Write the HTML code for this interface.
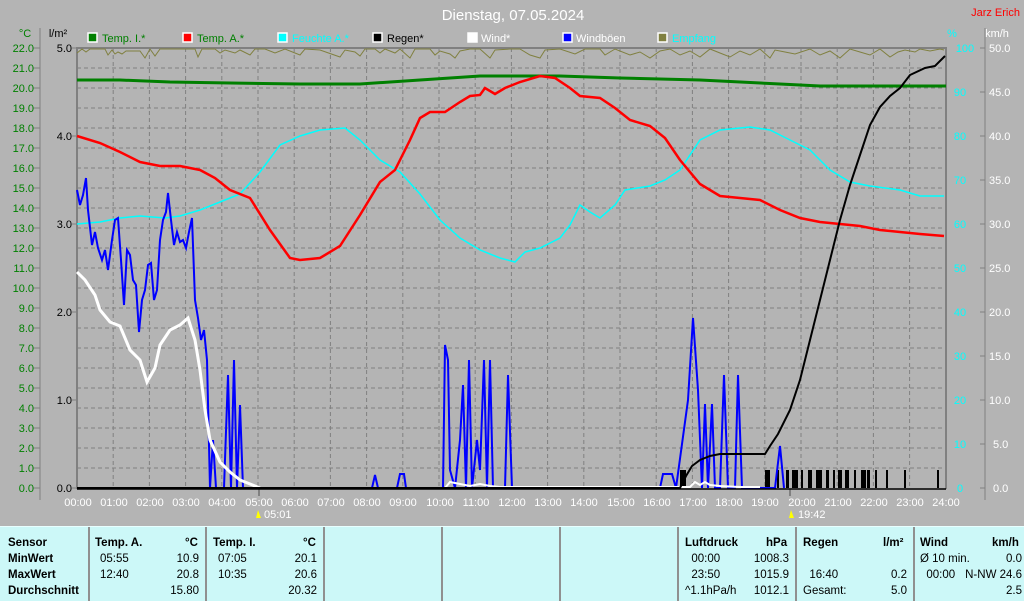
<!DOCTYPE html>
<html><head><meta charset="utf-8"><style>
html,body{margin:0;padding:0;background:#b4b4b4;}
body{width:1024px;height:600px;overflow:hidden;position:relative;font-family:"Liberation Sans",sans-serif;}
svg{position:absolute;left:0;top:0}
.tb{position:absolute;top:526px;left:0;width:1024px;height:74px;background:#ccf8f8;border-top:1px solid #e8ffff;}
.col{position:absolute;top:0;height:74px;border-left:2px solid #909090;}
.t{position:absolute;font-size:11.5px;color:#000;line-height:16px;white-space:nowrap}
.b{font-weight:bold}
</style></head><body>
<svg width="1024" height="526" viewBox="0 0 1024 526" font-family="Liberation Sans, sans-serif">
<text x="513" y="20" font-size="15" fill="#fff" text-anchor="middle">Dienstag, 07.05.2024</text>
<text x="1020" y="16" font-size="11" fill="#f00" text-anchor="end">Jarz Erich</text>
<text x="25" y="37" font-size="11" fill="#008000" text-anchor="middle">°C</text>
<text x="58" y="37" font-size="11" fill="#000" text-anchor="middle">l/m²</text>
<text x="952" y="37" font-size="11" fill="#0ff" text-anchor="middle">%</text>
<text x="997" y="37" font-size="11" fill="#fff" text-anchor="middle">km/h</text>
<g font-size="11">
<rect x="88" y="33" width="9" height="9" fill="#008000" stroke="#fff" stroke-width="1.5"/><text x="102" y="42" fill="#008000">Temp. I.*</text>
<rect x="183" y="33" width="9" height="9" fill="#f00" stroke="#fff" stroke-width="1.5"/><text x="197" y="42" fill="#008000">Temp. A.*</text>
<rect x="278" y="33" width="9" height="9" fill="#0ff" stroke="#fff" stroke-width="1.5"/><text x="292" y="42" fill="#0ff">Feuchte A.*</text>
<rect x="373" y="33" width="9" height="9" fill="#000" stroke="#fff" stroke-width="1.5"/><text x="387" y="42" fill="#000">Regen*</text>
<rect x="468" y="33" width="9" height="9" fill="#fff" stroke="#fff" stroke-width="1.5"/><text x="481" y="42" fill="#fff">Wind*</text>
<rect x="563" y="33" width="9" height="9" fill="#00f" stroke="#fff" stroke-width="1.5"/><text x="576" y="42" fill="#fff">Windböen</text>
<rect x="658" y="33" width="9" height="9" fill="#808040" stroke="#fff" stroke-width="1.5"/><text x="672" y="42" fill="#0ff">Empfang</text>
</g>
<!-- grid -->
<g stroke="#808080" stroke-dasharray="4,3" stroke-width="1">
<path d="M77 68H946M77 88H946M77 108H946M77 128H946M77 148H946M77 168H946M77 188H946M77 208H946M77 228H946M77 248H946M77 268H946M77 288H946M77 308H946M77 328H946M77 348H946M77 368H946M77 388H946M77 408H946M77 428H946M77 448H946M77 468H946"/>
<path d="M113.2 48V488M149.4 48V488M185.6 48V488M221.8 48V488M258 48V488M294.2 48V488M330.4 48V488M366.6 48V488M402.8 48V488M439 48V488M475.2 48V488M511.4 48V488M547.6 48V488M583.8 48V488M620 48V488M656.2 48V488M692.4 48V488M728.6 48V488M764.8 48V488M801 48V488M837.2 48V488M873.4 48V488M909.6 48V488"/>
</g>
<path d="M77 48H946V489M77 47V489" stroke="#808080" stroke-width="2" fill="none"/>
<path d="M40 28V500M33 48H40M33 68H40M33 88H40M33 108H40M33 128H40M33 148H40M33 168H40M33 188H40M33 208H40M33 228H40M33 248H40M33 268H40M33 288H40M33 308H40M33 328H40M33 348H40M33 368H40M33 388H40M33 408H40M33 428H40M33 448H40M33 468H40M33 488H40" stroke="#808080" fill="none"/>
<path d="M72 48H77M72 136H77M72 224H77M72 312H77M72 400H77M72 488H77" stroke="#808080"/>
<path d="M985 28V500M980 48H985M980 92H985M980 136H985M980 180H985M980 224H985M980 268H985M980 312H985M980 356H985M980 400H985M980 444H985M980 488H985" stroke="#808080" fill="none"/>
<g font-size="11" fill="#008000" text-anchor="end">
<text x="34" y="52">22.0</text><text x="34" y="72">21.0</text><text x="34" y="92">20.0</text><text x="34" y="112">19.0</text><text x="34" y="132">18.0</text><text x="34" y="152">17.0</text><text x="34" y="172">16.0</text><text x="34" y="192">15.0</text><text x="34" y="212">14.0</text><text x="34" y="232">13.0</text><text x="34" y="252">12.0</text><text x="34" y="272">11.0</text><text x="34" y="292">10.0</text><text x="34" y="312">9.0</text><text x="34" y="332">8.0</text><text x="34" y="352">7.0</text><text x="34" y="372">6.0</text><text x="34" y="392">5.0</text><text x="34" y="412">4.0</text><text x="34" y="432">3.0</text><text x="34" y="452">2.0</text><text x="34" y="472">1.0</text><text x="34" y="492">0.0</text>
</g>
<g font-size="11" fill="#000" text-anchor="end">
<text x="72" y="52">5.0</text><text x="72" y="140">4.0</text><text x="72" y="228">3.0</text><text x="72" y="316">2.0</text><text x="72" y="404">1.0</text><text x="72" y="492">0.0</text>
</g>
<g font-size="11" fill="#0ff" text-anchor="middle">
<text x="965" y="52">100</text><text x="960" y="96">90</text><text x="960" y="140">80</text><text x="960" y="184">70</text><text x="960" y="228">60</text><text x="960" y="272">50</text><text x="960" y="316">40</text><text x="960" y="360">30</text><text x="960" y="404">20</text><text x="960" y="448">10</text><text x="960" y="492">0</text>
</g>
<g font-size="11" fill="#fff">
<text x="989" y="52">50.0</text><text x="989" y="96">45.0</text><text x="989" y="140">40.0</text><text x="989" y="184">35.0</text><text x="989" y="228">30.0</text><text x="989" y="272">25.0</text><text x="989" y="316">20.0</text><text x="989" y="360">15.0</text><text x="989" y="404">10.0</text><text x="993" y="448">5.0</text><text x="993" y="492">0.0</text>
</g>
<g font-size="11" fill="#fff" text-anchor="middle">
<text x="78" y="506">00:00</text><text x="114" y="506">01:00</text><text x="150" y="506">02:00</text><text x="186" y="506">03:00</text><text x="222" y="506">04:00</text><text x="259" y="506">05:00</text><text x="295" y="506">06:00</text><text x="331" y="506">07:00</text><text x="367" y="506">08:00</text><text x="403" y="506">09:00</text><text x="440" y="506">10:00</text><text x="476" y="506">11:00</text><text x="512" y="506">12:00</text><text x="548" y="506">13:00</text><text x="584" y="506">14:00</text><text x="621" y="506">15:00</text><text x="657" y="506">16:00</text><text x="693" y="506">17:00</text><text x="729" y="506">18:00</text><text x="765" y="506">19:00</text><text x="802" y="506">20:00</text><text x="838" y="506">21:00</text><text x="874" y="506">22:00</text><text x="910" y="506">23:00</text><text x="946" y="506">24:00</text>
<text x="264" y="518" text-anchor="start">05:01</text><text x="798" y="518" text-anchor="start">19:42</text>
</g>
<path d="M259 489V496M790 489V496" stroke="#808080" stroke-width="2"/>
<path d="M258 510l3 8h-5z" fill="#ff0"/><path d="M791 510l3 8h-5z" fill="#ff0"/>
<!-- empfang -->
<polyline fill="none" stroke="#808040" stroke-width="1" points="77,53 82,49 86,52 90,49 105,49 108,55 112,50 115,54 118,52 122,54 126,51 140,51 145,58 150,49 155,56 160,49 195,49 198,57 202,49 215,49 220,53 225,50 235,53 240,50 250,55 255,49 265,49 275,53 285,49 300,55 305,49 320,50 340,57 345,50 355,52 360,56 365,49 375,49 380,53 385,49 395,53 400,49 410,58 415,49 430,49 435,55 440,51 450,54 455,58 460,51 470,49 480,49 490,58 495,50 510,49 520,49 530,55 540,58 545,50 560,49 575,54 585,49 600,49 605,55 615,49 630,55 640,52 650,58 660,51 670,49 680,55 690,51 700,57 710,49 720,53 730,57 740,51 750,55 760,49 770,58 775,50 785,52 795,54 810,49 820,55 830,51 840,58 850,49 860,52 870,55 880,49 890,57 898,52 905,50 915,52 920,49 930,51 940,49 944,50"/>
<!-- temp I -->
<polyline fill="none" stroke="#008000" stroke-width="3" points="77,80 120,80 170,82 230,83 300,84 360,84 420,80 480,76 560,76 620,78 700,80 780,84 820,86 946,86"/>
<!-- humidity -->
<polyline fill="none" stroke="#0ff" stroke-width="1.5" points="77,224 100,222 120,218 140,216 165,218 180,216 200,210 220,202 240,194 260,172 280,145 300,136 320,130 345,128 360,140 380,160 400,172 420,194 440,220 460,238 480,250 500,258 515,262 525,252 540,248 560,238 570,225 580,205 590,212 600,218 615,205 625,190 650,186 665,180 680,170 700,140 720,130 750,127 770,130 790,140 810,150 830,170 850,182 870,186 900,190 920,196 944,196"/>
<!-- temp A -->
<polyline fill="none" stroke="#f00" stroke-width="2.5" points="77,136 100,143 120,152 140,162 160,166 180,166 200,170 215,178 230,190 250,198 270,230 290,258 300,260 320,258 340,246 360,215 380,182 395,170 410,140 420,118 430,112 445,112 460,102 470,96 480,95 485,88 495,94 505,88 520,82 540,76 555,78 570,88 580,96 600,98 615,108 630,120 650,126 665,138 680,160 700,184 720,196 740,198 760,200 780,210 800,218 820,222 840,224 860,226 880,230 900,232 920,234 944,236"/>
<!-- rain bars -->
<g fill="#000"><rect x="680" y="470" width="6" height="18"/><rect x="765" y="470" width="5" height="18"/><rect x="777" y="470" width="2" height="18"/><rect x="786" y="470" width="3" height="18"/><rect x="792" y="470" width="6" height="18"/><rect x="801" y="470" width="2" height="18"/><rect x="808" y="470" width="4" height="18"/><rect x="816" y="470" width="6" height="18"/><rect x="826" y="470" width="3" height="18"/><rect x="833" y="470" width="2" height="18"/><rect x="838" y="470" width="4" height="18"/><rect x="845" y="470" width="4" height="18"/><rect x="854" y="470" width="2" height="18"/><rect x="861" y="470" width="5" height="18"/><rect x="867" y="470" width="3" height="18"/><rect x="875" y="470" width="2" height="18"/><rect x="886" y="470" width="2" height="18"/><rect x="904" y="470" width="2" height="18"/><rect x="937" y="470" width="2" height="18"/></g>
<!-- gusts -->
<polyline fill="none" stroke="#00f" stroke-width="2" points="77,190 80,205 83,195 86,178 88,210 92,245 95,232 98,248 102,260 105,250 108,270 112,240 115,220 118,218 121,260 124,305 127,250 130,255 133,280 136,285 139,332 142,300 145,290 148,265 151,263 154,300 157,290 160,240 163,220 166,212 168,193 171,220 174,245 177,232 180,242 183,240 186,248 189,232 192,218 195,300 198,318 201,340 204,330 207,360 210,488 213,440 216,488 224,488 228,375 231,488 234,360 237,488 240,405 243,488 372,488 375,475 378,488 397,488 400,474 404,474 406,488 443,488 445,345 448,360 450,470 455,488 460,440 463,385 466,488 469,360 472,488 477,440 480,470 484,360 487,488 490,360 493,488 505,488 508,375 512,488 660,488 663,474 672,474 676,488 688,400 693,318 698,390 702,488 705,404 708,488 712,404 715,488 720,488 724,375 728,488 735,488 738,375 742,488 775,488 780,446 784,488"/>
<!-- wind -->
<polyline fill="none" stroke="#fff" stroke-width="3" points="77,272 85,280 95,295 100,310 110,322 120,326 130,350 140,360 147,382 155,368 160,345 170,330 180,325 188,318 195,340 200,370 205,410 210,440 220,462 230,472 240,480 255,486 260,488"/>
<polyline fill="none" stroke="#fff" stroke-width="2" points="445,488 450,482 460,484 470,486 480,484 490,486 500,487 520,487 690,487 695,482 700,485 705,482 710,485 720,486 740,487 760,487"/>
<!-- rain sum -->
<polyline fill="none" stroke="#000" stroke-width="2" points="77,488 680,488 686,476 692,466 700,460 710,456 720,454 765,454 770,446 778,434 790,410 800,380 810,340 820,300 830,260 840,220 850,185 860,155 870,125 880,107 890,96 900,88 910,75 925,68 935,66 945,56"/>
<path d="M77 489H946" stroke="#000" stroke-width="1.5"/>
</svg>
<div class="tb">
<div class="col" style="left:88px"></div><div class="col" style="left:205px"></div><div class="col" style="left:323px"></div><div class="col" style="left:441px"></div><div class="col" style="left:559px"></div><div class="col" style="left:677px"></div><div class="col" style="left:795px"></div><div class="col" style="left:913px"></div>
<div class="t b" style="left:8px;top:8px">Sensor<br>MinWert<br>MaxWert<br>Durchschnitt</div>
<div class="t b" style="left:95px;top:8px">Temp. A.</div><div class="t b" style="left:185px;top:8px">°C</div>
<div class="t" style="left:100px;top:24px">05:55<br>12:40</div>
<div class="t" style="right:825px;top:24px;text-align:right">10.9<br>20.8<br>15.80</div>
<div class="t b" style="left:213px;top:8px">Temp. I.</div><div class="t b" style="left:303px;top:8px">°C</div>
<div class="t" style="left:218px;top:24px">07:05<br>10:35</div>
<div class="t" style="right:707px;top:24px;text-align:right">20.1<br>20.6<br>20.32</div>
<div class="t b" style="left:685px;top:8px">Luftdruck</div><div class="t b" style="left:766px;top:8px">hPa</div>
<div class="t" style="left:685px;top:24px">&nbsp;&nbsp;00:00<br>&nbsp;&nbsp;23:50<br>^1.1hPa/h</div>
<div class="t" style="right:235px;top:24px;text-align:right">1008.3<br>1015.9<br>1012.1</div>
<div class="t b" style="left:803px;top:8px">Regen</div><div class="t b" style="left:883px;top:8px">l/m²</div>
<div class="t" style="left:803px;top:24px"><br>&nbsp;&nbsp;16:40<br>Gesamt:</div>
<div class="t" style="right:117px;top:24px;text-align:right"><br>0.2<br>5.0</div>
<div class="t b" style="left:920px;top:8px">Wind</div><div class="t b" style="left:992px;top:8px">km/h</div>
<div class="t" style="left:920px;top:24px">Ø 10 min.<br>&nbsp;&nbsp;00:00</div>
<div class="t" style="right:2px;top:24px;text-align:right">0.0<br>N-NW 24.6<br>2.5</div>
</div>
</body></html>
